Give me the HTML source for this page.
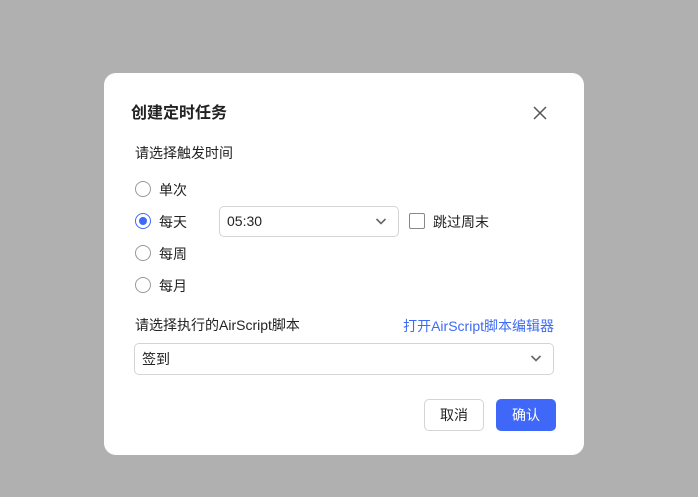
<!DOCTYPE html>
<html><head><meta charset="utf-8"><style>
*{box-sizing:border-box;margin:0;padding:0}
body{width:698px;height:497px;background:#b0b0b0;font-family:"Liberation Sans","Noto Sans CJK SC",sans-serif;color:#222;position:relative;overflow:hidden}
.m{position:absolute;left:104px;top:73px;width:480px;height:382px;background:#fff;border-radius:12px}
.a{position:absolute;white-space:nowrap}
.r{position:absolute;width:16px;height:16px;border:1px solid #999;border-radius:50%;left:135px}
.r.on{border-color:#3f68f6}
.r.on::after{content:"";position:absolute;left:3px;top:3px;width:8px;height:8px;border-radius:50%;background:#3f68f6}
.lbl{position:absolute;left:159px;font-size:14px;line-height:16px}
.sel{position:absolute;border:1px solid #d4d4d4;border-radius:5px;background:#fff;font-size:14px}
.btn{position:absolute;top:399px;width:60px;height:32px;border-radius:5px;font-size:14px;text-align:center;line-height:30px}
</style></head><body>
<div class="m"></div>
<div class="a" style="left:131px;top:103px;font-size:16px;font-weight:bold;line-height:22px">创建定时任务</div>
<svg class="a" style="left:532px;top:105px" width="16" height="16" viewBox="0 0 16 16"><path d="M2 2L14 14M14 2L2 14" stroke="#555" stroke-width="1.5"/></svg>
<div class="a" style="left:135px;top:145px;font-size:14px;line-height:16px">请选择触发时间</div>
<div class="r" style="top:181px"></div><div class="lbl" style="top:182px">单次</div>
<div class="r on" style="top:213px"></div><div class="lbl" style="top:214px">每天</div>
<div class="r" style="top:245px"></div><div class="lbl" style="top:246px">每周</div>
<div class="r" style="top:277px"></div><div class="lbl" style="top:278px">每月</div>
<div class="sel" style="left:219px;top:206px;width:180px;height:31px;line-height:29px;padding-left:7px">05:30</div>
<svg class="a" style="left:375px;top:216px" width="12" height="10" viewBox="0 0 12 10"><path d="M1.5 3L6 7.5L10.5 3" stroke="#666" stroke-width="1.6" fill="none"/></svg>
<div class="a" style="left:409px;top:213px;width:16px;height:16px;border:1px solid #888;border-radius:2px"></div>
<div class="a" style="left:433px;top:214px;font-size:14px;line-height:16px">跳过周末</div>
<div class="a" style="left:135px;top:317px;font-size:14px;line-height:16px">请选择执行的AirScript脚本</div>
<div class="a" style="right:144px;top:318px;font-size:14px;line-height:16px;color:#3d6bf3">打开AirScript脚本编辑器</div>
<div class="sel" style="left:134px;top:343px;width:420px;height:32px;line-height:30px;padding-left:7px">签到</div>
<svg class="a" style="left:530px;top:353px" width="12" height="10" viewBox="0 0 12 10"><path d="M1.5 3L6 7.5L10.5 3" stroke="#666" stroke-width="1.6" fill="none"/></svg>
<div class="btn" style="left:424px;border:1px solid #d4d4d4;background:#fff">取消</div>
<div class="btn" style="left:496px;background:#4068f8;color:#fff;line-height:32px">确认</div>
</body></html>
